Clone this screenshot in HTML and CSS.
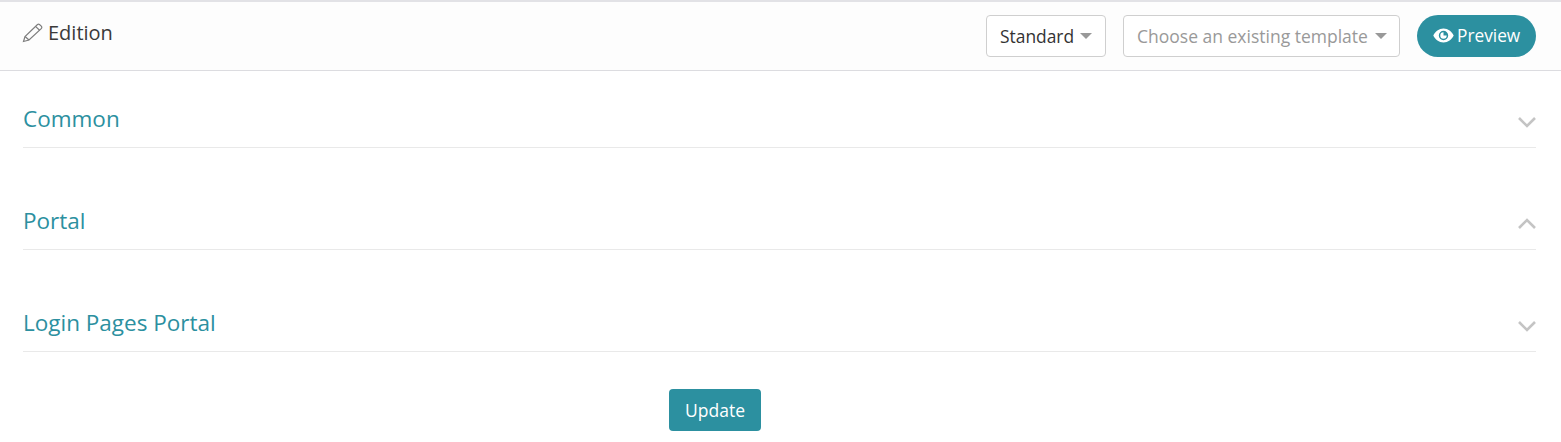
FILE: index.html
```html
<!DOCTYPE html>
<html lang="en">
<head>
    <meta charset="UTF-8">
    <title>Edition</title>
    <link rel="stylesheet" href="styles.css">
</head>
<body>
    <div class="topbar">
        <div class="topbar-title">
            <svg class="pencil" width="22" height="20" viewBox="0 0 22 20" fill="none" stroke="#7d7d7d" stroke-width="1.2">
                <path d="M1.5 18.5 L3 13.5 L15.5 1.5 Q16.5 0.8 17.5 1.5 L19.5 3.4 Q20.2 4.4 19.5 5.4 L7 17 Z"/>
                <path d="M3 13.5 L7 17 M13.5 3.4 L17.6 7.2"/>
            </svg>
            <span>Edition</span>
        </div>
        <div class="topbar-actions">
            <button class="select-btn standard-btn">Standard<i class="caret"></i></button>
            <button class="select-btn template-btn">Choose an existing template<i class="caret"></i></button>
            <button class="preview-btn">
                <svg width="21" height="17" viewBox="0 0 21 17">
                    <path fill="#fff" fill-rule="evenodd" d="M10.5 1.500C15 1.500 18.800 4.600 20.700 8.500 18.800 12.400 15 15.500 10.500 15.500S2.200 12.400.300 8.500C2.200 4.600 6 1.500 10.500 1.500ZM10.500 3.800A4.700 4.700 0 1 0 10.500 13.200 4.700 4.700 0 0 0 10.500 3.800Z"/>
                    <path fill="#fff" d="M10.500 5.300A3.200 3.200 0 1 0 13.700 8.500H10.500Z"/>
                </svg>
                <span>Preview</span>
            </button>
        </div>
    </div>

    <div class="sections">
        <div class="section">
            <h3>Common</h3>
            <svg class="chevron" width="18" height="12" viewBox="0 0 18 12"><path d="M1 2 L9 10 L17 2"/></svg>
        </div>
        <div class="section">
            <h3>Portal</h3>
            <svg class="chevron" width="18" height="12" viewBox="0 0 18 12"><path d="M1 10 L9 2 L17 10"/></svg>
        </div>
        <div class="section">
            <h3>Login Pages Portal</h3>
            <svg class="chevron" width="18" height="12" viewBox="0 0 18 12"><path d="M1 2 L9 10 L17 2"/></svg>
        </div>
    </div>

    <div class="form-footer">
        <button class="update-btn">Update</button>
    </div>
</body>
</html>
```

FILE: styles.css
```css
body {
    margin: 0;
    font-family: "Open Sans", Arial, sans-serif;
    color: #333;
    background: #fff;
}
button {
    font-family: inherit;
    cursor: pointer;
}
.topbar {
    display: flex;
    justify-content: space-between;
    align-items: flex-start;
    height: 68px;
    padding: 0 25px 0 22px;
    background: #fdfdfd;
    border-top: 2px solid #e2e2e6;
    border-bottom: 1px solid #dcdce0;
}
.topbar-title {
    display: flex;
    align-items: center;
    gap: 4px;
    margin-top: 19px;
    font-size: 20px;
    line-height: 24px;
    color: #3a3a3a;
}
.topbar-actions {
    display: flex;
    gap: 17px;
    margin-top: 13px;
}
.select-btn {
    display: flex;
    align-items: center;
    height: 42px;
    padding: 0 13px;
    font-size: 17.4px;
    white-space: nowrap;
    color: #333;
    background: #fff;
    border: 1px solid #cfcfcf;
    border-radius: 4px;
}
.standard-btn {
    width: 120px;
}
.template-btn {
    width: 277px;
    font-size: 17.5px;
    color: #999;
}
.caret {
    flex: none;
    width: 0;
    height: 0;
    margin-left: 6px;
    border-left: 6px solid transparent;
    border-right: 6px solid transparent;
    border-top: 6px solid #999;
}
.template-btn .caret {
    margin-left: 7px;
}
.preview-btn {
    display: flex;
    align-items: center;
    gap: 3px;
    width: 119px;
    height: 42px;
    padding: 0 0 2px 16px;
    font-size: 17.3px;
    color: #fff;
    background: #2c90a0;
    border: none;
    border-radius: 21px;
}
.sections {
    padding: 0 25px 0 23px;
}
.section {
    display: flex;
    justify-content: space-between;
    align-items: center;
    box-sizing: border-box;
    height: 77px;
    padding-top: 19px;
    margin-bottom: 25px;
    border-bottom: 1px solid #e9e9e9;
}
.section h3 {
    margin: 0;
    font-size: 22.5px;
    font-weight: 400;
    color: #2c90a0;
}
.chevron {
    margin-top: 6px;
    fill: none;
    stroke: #c4c4c4;
    stroke-width: 2.6;
}
.form-footer {
    margin-top: 37px;
    padding-left: 669px;
}
.update-btn {
    width: 92px;
    height: 42px;
    padding: 0;
    font-size: 17.5px;
    color: #fff;
    background: #2c90a0;
    border: none;
    border-radius: 4px;
}
```
